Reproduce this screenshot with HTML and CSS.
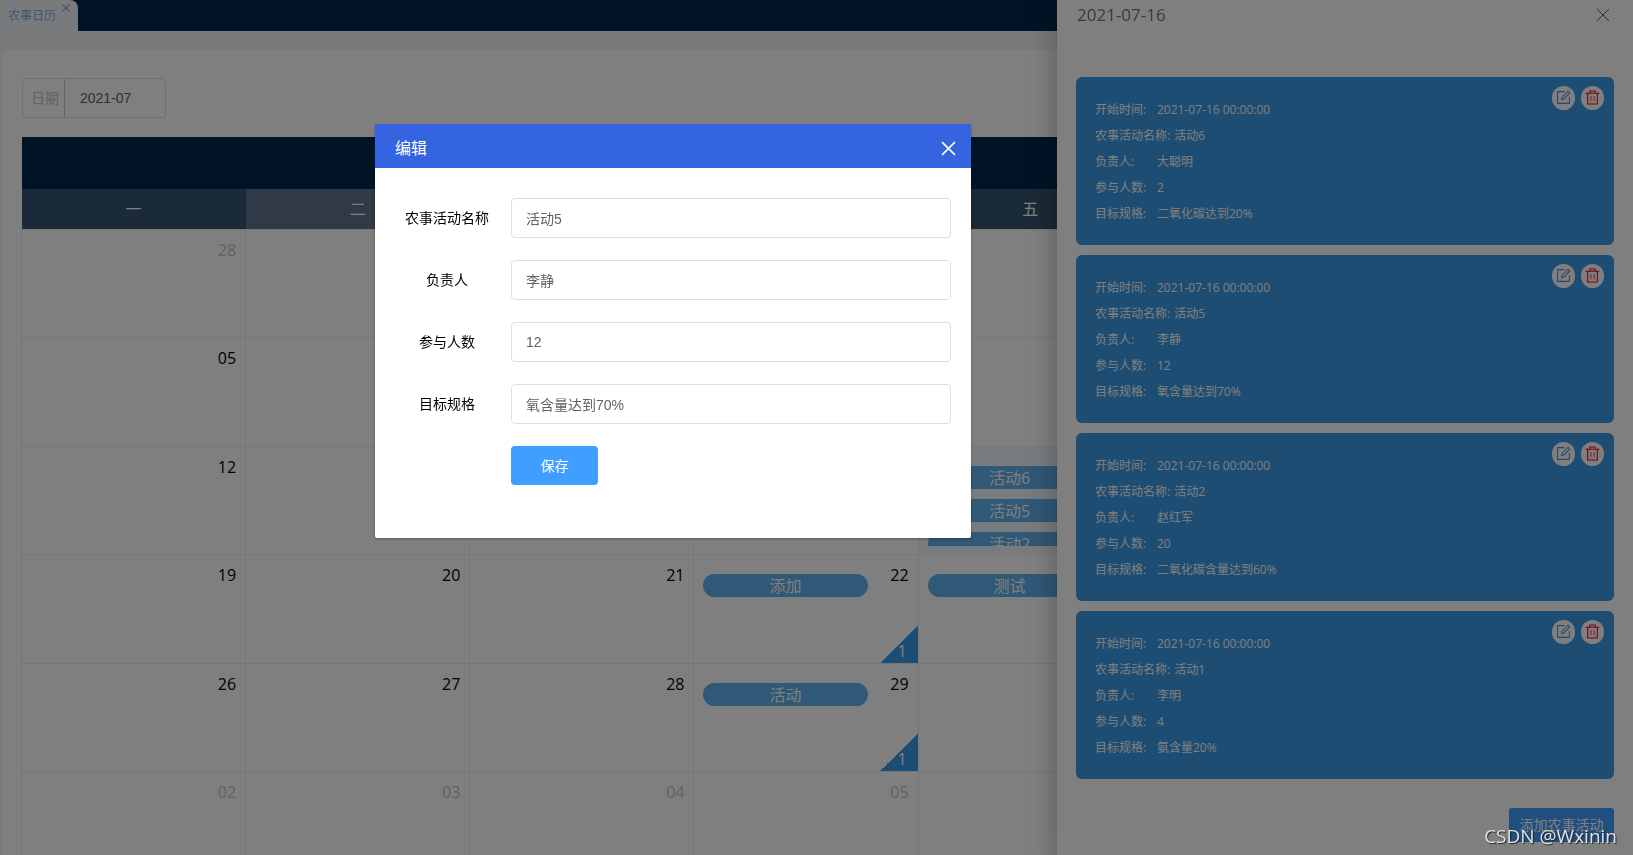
FILE: index.html
```html
<!DOCTYPE html>
<html lang="zh-CN">
<head>
<meta charset="utf-8">
<meta name="viewport" content="width=device-width, initial-scale=1">
<title>农事日历</title>
<link rel="stylesheet" href="styles.css">
</head>
<body>
<svg class="sprite" aria-hidden="true">
  <symbol id="icon-close" viewBox="0 0 14 14"><path d="M1 1L13 13M13 1L1 13" fill="none" stroke="currentColor"/></symbol>
  <symbol id="icon-edit" viewBox="0 0 14 14"><path d="M8 1.5H1.5V12.5H12.5V6.500M5.200 8.800L5.700 6.700L11.300 1.100L12.900 2.700L7.300 8.300Z" fill="none" stroke="currentColor"/></symbol>
  <symbol id="icon-delete" viewBox="0 0 14 14"><path d="M0.500 3H13.500M4.500 3V1H9.500V3M2.500 3V13H11.500V3" fill="none" stroke="currentColor"/><path d="M5.500 5.500V10.500M8.500 5.500V10.500" fill="none" stroke="currentColor" opacity=".7"/></symbol>
</svg>

<div class="app">
  <nav class="tabs">
    <div class="tab">
      <a class="tab-link" href="#calendar">农事日历</a>
      <button class="tab-close" type="button" aria-label="关闭标签"><svg><use href="#icon-close"/></svg></button>
    </div>
  </nav>
  <main class="panel" id="calendar">
    <div class="picker">
      <label class="picker-label" for="month">日期</label>
      <input class="picker-input" id="month" type="text" value="2021-07">
    </div>
    <table class="calendar">
      <thead>
        <tr class="banner"><td colspan="7"></td></tr>
        <tr class="weekdays"><th>一</th><th>二</th><th>三</th><th>四</th><th>五</th><th>六</th><th>日</th></tr>
      </thead>
      <tbody>
        <tr>
          <td class="other"><div class="day"><span class="num">28</span></div></td>
          <td class="other"><div class="day"><span class="num">29</span></div></td>
          <td class="other"><div class="day"><span class="num">30</span></div></td>
          <td><div class="day"><span class="num">01</span></div></td>
          <td><div class="day"><span class="num">02</span></div></td>
          <td><div class="day"><span class="num">03</span></div></td>
          <td><div class="day"><span class="num">04</span></div></td>
        </tr>
        <tr>
          <td><div class="day"><span class="num">05</span></div></td>
          <td><div class="day"><span class="num">06</span></div></td>
          <td><div class="day"><span class="num">07</span></div></td>
          <td><div class="day"><span class="num">08</span></div></td>
          <td><div class="day"><span class="num">09</span></div></td>
          <td><div class="day"><span class="num">10</span></div></td>
          <td><div class="day"><span class="num">11</span></div></td>
        </tr>
        <tr>
          <td><div class="day"><span class="num">12</span></div></td>
          <td><div class="day"><span class="num">13</span></div></td>
          <td><div class="day"><span class="num">14</span></div></td>
          <td><div class="day"><span class="num">15</span></div></td>
          <td class="selected"><div class="day"><div class="events"><span class="event">活动6</span><span class="event">活动5</span><span class="event">活动2</span></div><span class="num">16</span></div></td>
          <td><div class="day"><span class="num">17</span></div></td>
          <td><div class="day"><span class="num">18</span></div></td>
        </tr>
        <tr>
          <td><div class="day"><span class="num">19</span></div></td>
          <td><div class="day"><span class="num">20</span></div></td>
          <td><div class="day"><span class="num">21</span></div></td>
          <td><div class="day"><div class="events"><span class="event">添加</span></div><span class="num">22</span></div><span class="corner">1</span></td>
          <td><div class="day"><div class="events"><span class="event">测试</span></div><span class="num">23</span></div></td>
          <td><div class="day"><span class="num">24</span></div></td>
          <td><div class="day"><span class="num">25</span></div></td>
        </tr>
        <tr>
          <td><div class="day"><span class="num">26</span></div></td>
          <td><div class="day"><span class="num">27</span></div></td>
          <td><div class="day"><span class="num">28</span></div></td>
          <td><div class="day"><div class="events"><span class="event">活动</span></div><span class="num">29</span></div><span class="corner">1</span></td>
          <td><div class="day"><span class="num">30</span></div></td>
          <td><div class="day"><span class="num">31</span></div></td>
          <td class="other"><div class="day"><span class="num">01</span></div></td>
        </tr>
        <tr>
          <td class="other"><div class="day"><span class="num">02</span></div></td>
          <td class="other"><div class="day"><span class="num">03</span></div></td>
          <td class="other"><div class="day"><span class="num">04</span></div></td>
          <td class="other"><div class="day"><span class="num">05</span></div></td>
          <td class="other"><div class="day"><span class="num">06</span></div></td>
          <td class="other"><div class="day"><span class="num">07</span></div></td>
          <td class="other"><div class="day"><span class="num">08</span></div></td>
        </tr>
      </tbody>
    </table>
  </main>
</div>

<aside class="drawer">
  <header class="drawer-head">
    <span>2021-07-16</span>
    <button class="drawer-close" type="button" aria-label="关闭"><svg><use href="#icon-close"/></svg></button>
  </header>
  <div class="cards">
    <article class="card">
      <dl>
        <div><dt>开始时间:</dt><dd>2021-07-16 00:00:00</dd></div>
        <div><dt>农事活动名称:</dt><dd>活动6</dd></div>
        <div><dt>负责人:</dt><dd>大聪明</dd></div>
        <div><dt>参与人数:</dt><dd>2</dd></div>
        <div><dt>目标规格:</dt><dd>二氧化碳达到20%</dd></div>
      </dl>
      <div class="actions"><button class="edit" type="button" aria-label="编辑"><svg><use href="#icon-edit"/></svg></button><button class="delete" type="button" aria-label="删除"><svg><use href="#icon-delete"/></svg></button></div>
    </article>
    <article class="card">
      <dl>
        <div><dt>开始时间:</dt><dd>2021-07-16 00:00:00</dd></div>
        <div><dt>农事活动名称:</dt><dd>活动5</dd></div>
        <div><dt>负责人:</dt><dd>李静</dd></div>
        <div><dt>参与人数:</dt><dd>12</dd></div>
        <div><dt>目标规格:</dt><dd>氧含量达到70%</dd></div>
      </dl>
      <div class="actions"><button class="edit" type="button" aria-label="编辑"><svg><use href="#icon-edit"/></svg></button><button class="delete" type="button" aria-label="删除"><svg><use href="#icon-delete"/></svg></button></div>
    </article>
    <article class="card">
      <dl>
        <div><dt>开始时间:</dt><dd>2021-07-16 00:00:00</dd></div>
        <div><dt>农事活动名称:</dt><dd>活动2</dd></div>
        <div><dt>负责人:</dt><dd>赵红军</dd></div>
        <div><dt>参与人数:</dt><dd>20</dd></div>
        <div><dt>目标规格:</dt><dd>二氧化碳含量达到60%</dd></div>
      </dl>
      <div class="actions"><button class="edit" type="button" aria-label="编辑"><svg><use href="#icon-edit"/></svg></button><button class="delete" type="button" aria-label="删除"><svg><use href="#icon-delete"/></svg></button></div>
    </article>
    <article class="card">
      <dl>
        <div><dt>开始时间:</dt><dd>2021-07-16 00:00:00</dd></div>
        <div><dt>农事活动名称:</dt><dd>活动1</dd></div>
        <div><dt>负责人:</dt><dd>李明</dd></div>
        <div><dt>参与人数:</dt><dd>4</dd></div>
        <div><dt>目标规格:</dt><dd>氨含量20%</dd></div>
      </dl>
      <div class="actions"><button class="edit" type="button" aria-label="编辑"><svg><use href="#icon-edit"/></svg></button><button class="delete" type="button" aria-label="删除"><svg><use href="#icon-delete"/></svg></button></div>
    </article>
  </div>
  <button class="add" type="button">添加农事活动</button>
</aside>

<div class="overlay">
  <section class="dialog" role="dialog" aria-labelledby="dialog-title">
    <header class="dialog-head">
      <h2 id="dialog-title">编辑</h2>
      <button class="dialog-close" type="button" aria-label="关闭"><svg><use href="#icon-close"/></svg></button>
    </header>
    <form class="form">
      <label for="name">农事活动名称</label><input id="name" type="text" value="活动5">
      <label for="owner">负责人</label><input id="owner" type="text" value="李静">
      <label for="people">参与人数</label><input id="people" type="text" value="12">
      <label for="target">目标规格</label><input id="target" type="text" value="氧含量达到70%">
      <button class="save" type="button">保存</button>
    </form>
  </section>
</div>
<div class="watermark">CSDN @Wxinin</div>
</body>
</html>
```
FILE: styles.css
```css
* { box-sizing: border-box; }
html, body { height: 100%; }
body {
  margin: 0;
  overflow: hidden;
  background: #f3f5f8;
  color: #000;
  font: 16px/24px "Open Sans", "Noto Sans CJK SC", sans-serif;
}
button, input { margin: 0; font: 14px/20px "Liberation Sans", "Noto Sans CJK SC", sans-serif; }
button { padding: 0; border: 0; background: none; cursor: pointer; }
svg { display: block; width: 100%; height: 100%; }
.sprite { position: absolute; width: 0; height: 0; }

.app { height: 100vh; overflow: hidden; }
.tabs { display: flex; height: 31px; background: #00284d; }
.tab {
  position: relative;
  width: 78px;
  padding-left: 8px;
  border-top-right-radius: 8px;
  background: #f3f5f8;
}
.tab-link { color: #7fb0ea; font-size: 12px; line-height: 32px; text-decoration: none; }
.tab-close { position: absolute; top: 4px; right: 8px; width: 8px; height: 8px; color: #8a98cc; }
.tab-close svg { stroke-width: 2; }
.panel {
  margin: 19px 0 0 3px;
  padding: 28px 42px 0 18px;
  background: #fff;
}

.picker {
  display: flex;
  width: 144px;
  height: 40px;
  margin-left: 1px;
  border: 1px solid #dcdfe6;
  border-radius: 4px;
}
.picker-label {
  width: 42px;
  padding-left: 8px;
  border-right: 1px solid #c6c8cf;
  color: #c0c4cc;
  font-size: 14px;
  line-height: 38px;
}
.picker-input { flex: 1; min-width: 0; padding: 0 15px; border: 0; background: none; color: #606266; }

.calendar {
  width: 100%;
  height: 744px;
  margin-top: 19px;
  border-collapse: collapse;
  table-layout: fixed;
}
.banner td { height: 52px; padding: 0; background: #00284d; }
.weekdays th { height: 40px; padding: 0; background: #5e748c; color: #fff; font-weight: 400; }
.weekdays th:nth-child(odd) { background: #365470; }
tbody td {
  position: relative;
  height: 108px;
  padding: 0;
  border: 1px solid #ebeef5;
  vertical-align: top;
}
.day { display: flex; justify-content: space-between; padding: 0 9px; }
.num { margin-left: auto; padding-top: 8px; }
.other .num { color: #c0c4cc; }
.events {
  display: flex;
  flex-direction: column;
  gap: 10px;
  width: 80%;
  max-height: 80px;
  margin-top: 19px;
  overflow: hidden;
}
.event {
  flex: none;
  height: 23px;
  border-radius: 12px;
  background: #61b0ee;
  color: #fff;
  line-height: 24px;
  text-align: center;
}
.selected { background: #f2f8fe; box-shadow: 0 0 16px rgba(0, 0, 0, .3); }
.corner {
  position: absolute;
  right: 0;
  bottom: 0;
  width: 38px;
  height: 38px;
  padding-right: 11px;
  background: linear-gradient(135deg, transparent 50%, #3a9ae6 50%);
  color: #fff;
  line-height: 52px;
  text-align: right;
}

.drawer {
  position: fixed;
  inset: 0 0 0 auto;
  display: flex;
  flex-direction: column;
  width: 576px;
  padding: 0 19px;
  background: #fff;
  box-shadow: 0 8px 10px -5px rgba(0, 0, 0, .2), 0 16px 24px 2px rgba(0, 0, 0, .14), 0 6px 30px 5px rgba(0, 0, 0, .12);
}
.drawer-head {
  display: flex;
  align-items: center;
  justify-content: space-between;
  height: 29px;
  margin-bottom: 48px;
  padding: 0 4px 0 1px;
  color: #72767b;
  font-size: 17px;
}
.drawer-close { width: 14px; height: 14px; color: #606266; }
.cards { display: grid; gap: 10px; }
.card {
  position: relative;
  padding: 20px 20px 18px 19px;
  border-radius: 6px;
  background: #3a9ae6;
  color: #fff;
  font-size: 12px;
  line-height: 26px;
}
.card dl { margin: 0; }
.card dl div { display: flex; gap: 4px; }
.card dt { min-width: 58px; }
.card dd { margin: 0; }
.actions { position: absolute; top: 9px; right: 10px; display: flex; gap: 6px; }
.actions button { width: 23px; height: 24px; padding: 4px 4px 5px; border-radius: 12px; background: #fff; }
.actions .edit { color: #5c8fd6; }
.actions .delete { color: #f00018; }
.add {
  align-self: flex-end;
  width: 105px;
  height: 34px;
  margin-top: 29px;
  border-radius: 3px;
  background: #409eff;
  color: #fff;
}

.overlay {
  position: fixed;
  inset: 0;
  padding: 124px 0 0 375px;
  background: rgba(0, 0, 0, .5);
}
.dialog {
  width: 596px;
  border-radius: 2px;
  background: #fff;
  box-shadow: 0 1px 3px rgba(0, 0, 0, .3);
}
.dialog-head {
  display: flex;
  align-items: center;
  justify-content: space-between;
  height: 44px;
  padding: 4px 15px 0 20px;
  background: #3464e0;
  color: #fff;
}
.dialog-head h2 { margin: 0; font-size: 16px; font-weight: 400; }
.dialog-close { width: 15px; height: 15px; color: #fff; }
.dialog-close svg { stroke-width: 1.5; }
.form {
  display: grid;
  grid-template-columns: 128px 1fr;
  row-gap: 22px;
  align-items: center;
  padding: 30px 20px 53px 8px;
  font-size: 14px;
}
.form label { text-align: center; }
.form input {
  width: 100%;
  height: 40px;
  padding: 0 14px;
  border: 1px solid #dcdfe6;
  border-radius: 4px;
  background: #fff;
  color: #606266;
}
.save {
  grid-column: 2;
  justify-self: start;
  width: 87px;
  height: 39px;
  border-radius: 4px;
  background: #409eff;
  color: #fff;
}
.watermark {
  position: fixed;
  right: 16px;
  bottom: 7px;
  color: #e2e2e2;
  font-size: 19px;
  text-shadow: 1px 1px 1px #222;
}
```
